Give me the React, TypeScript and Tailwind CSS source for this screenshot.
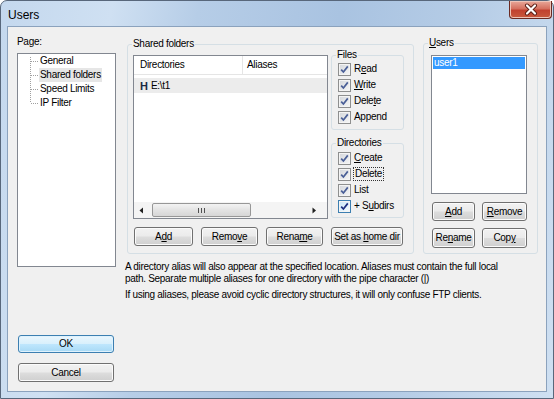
import React from 'react';

const btnBase =
  'flex items-center justify-center rounded-[3px] border text-[10px] leading-none text-black shadow-[inset_0_0_0_1px_#fbfbfb]';
const btnGrey = 'border-[#707070] bg-[linear-gradient(to_bottom,#f2f2f2_0%,#ebebeb_48%,#dddddd_52%,#cfcfcf_100%)]';

function Btn({ children, className = '', strong = false }: { children: React.ReactNode; className?: string; strong?: boolean }) {
  return (
    <div
      className={`${btnBase} ${btnGrey} ${
        strong ? 'border-[#1e1e1e] shadow-[inset_0_0_0_1px_#1e1e1e,inset_0_0_0_2px_#f6f6f6]' : ''
      } ${className}`}
    >
      <span className="whitespace-pre">{children}</span>
    </div>
  );
}

function Check({ label, focus = false, hot = false }: { label: React.ReactNode; focus?: boolean; hot?: boolean }) {
  return (
    <div className="flex h-[16px] items-center gap-[3px] pl-[6px]">
      <span
        className={`flex h-[13px] w-[13px] items-center justify-center border ${
          hot
            ? 'border-[#3c7fb1] bg-[linear-gradient(135deg,#c9e6f7,#f5fbfe)]'
            : 'border-[#8e8f8f] bg-[linear-gradient(135deg,#d3d6db,#f7f7f7)]'
        } shadow-[inset_0_0_0_1px_#f4f4f4]`}
      >
        <svg width="9" height="9" viewBox="0 0 9 9">
          <path
            d="M1.2 4.6 L3.4 7 L7.8 1.4"
            fill="none"
            stroke={hot ? '#1c2f80' : '#4a5f97'}
            strokeWidth="1.7"
          />
        </svg>
      </span>
      <span className={focus ? 'outline-1 outline-dotted outline-[#333] px-[1px]' : ''}>{label}</span>
    </div>
  );
}

function Group({
  legend,
  className = '',
  children,
}: {
  legend: React.ReactNode;
  className?: string;
  children: React.ReactNode;
}) {
  return (
    <fieldset className={`rounded-[3px] border border-[#d5dfe5] ${className}`}>
      <legend className="ml-[4px] px-[1px] leading-[12px]">{legend}</legend>
      {children}
    </fieldset>
  );
}

export default function App() {
  return (
    <div className="h-[399px] w-[554px] bg-white font-['Liberation_Sans',Arial,sans-serif]">
      <div className="flex h-[399px] w-[554px] flex-col rounded-t-[7px] border border-[#58677b] bg-[linear-gradient(100deg,#c4d8ee_0%,#cfe0f2_18%,#b6cde7_32%,#a9c3e1_55%,#b5cce6_75%,#cfe0f2_100%)] px-[6px]">
        {/* title bar */}
        <div className="flex h-[25px] items-start justify-between">
          <span className="pl-[1px] pt-[7px] text-[12px] leading-[14px] text-black">Users</span>
          <div className="-mr-[5px] flex h-[18px] w-[43px] items-center justify-center rounded-b-[4px] border border-t-0 border-[#6b2a22] bg-[linear-gradient(to_bottom,#e9a99a_0%,#d5705f_45%,#c1412f_55%,#c85a3e_100%)] shadow-[inset_0_0_0_1px_#eec4b8]">
            <svg width="16" height="13" viewBox="0 0 16 13">
              <path d="M4 2.5 L12 10.5 M12 2.5 L4 10.5" stroke="#5a1d14" strokeWidth="4" strokeLinecap="round" />
              <path d="M4 2.5 L12 10.5 M12 2.5 L4 10.5" stroke="#ffffff" strokeWidth="2.2" strokeLinecap="round" />
            </svg>
          </div>
        </div>

        {/* client area */}
        <div className="flex h-[366px] w-[540px] border border-[#8ba2bd] bg-[#f0f0f0] text-[10px] leading-[12px] tracking-[-0.3px] text-black">
          {/* left column */}
          <div className="ml-[9px] flex w-[99px] flex-col pt-[9px]">
            <span className="h-[12px]">Page:</span>
            <div className="mt-[5px] flex h-[214px] border border-[#828790] bg-white">
              <svg width="21" height="56" viewBox="0 0 21 56" className="shrink-0">
                <g stroke="#a0a0a0" strokeWidth="1" strokeDasharray="1 1">
                  <path d="M12.5 3 V49" />
                  <path d="M13 7.5 H20 M13 21.5 H20 M13 35.5 H20 M13 49.5 H20" />
                </g>
              </svg>
              <div className="flex flex-col">
                <span className="h-[14px] px-[1px] leading-[14px]">General</span>
                <span className="h-[14px] bg-[#e6e6e6] px-[1px] leading-[14px]">Shared folders</span>
                <span className="h-[14px] px-[1px] leading-[14px]">Speed Limits</span>
                <span className="h-[14px] px-[1px] leading-[14px]">IP Filter</span>
              </div>
            </div>
            <div className="ml-[1px] mt-[68px] flex h-[18px] w-[96px] items-center justify-center rounded-[3px] border border-[#3c7fb1] bg-[linear-gradient(to_bottom,#eaf6fd_0%,#d9f0fc_48%,#bee6fd_52%,#a7d9f5_100%)] text-[10px] shadow-[inset_0_0_0_1px_#dff2fd]">
              OK
            </div>
            <Btn className="ml-[1px] mt-[10px] h-[19px] w-[96px]">Cancel</Btn>
          </div>

          {/* right region */}
          <div className="ml-[11px] flex flex-col pt-[11px]">
            <div className="flex items-start gap-[9px]">
              {/* shared folders */}
              <Group legend="Shared folders" className="h-[216px] w-[287px]">
                <div className="px-[5px] pt-[5px]">
                  <div className="flex items-start gap-[3px]">
                    <div className="flex h-[164px] w-[195px] flex-col border border-[#828790] bg-white">
                      <div className="flex h-[19px] border-b border-[#e5e5e5]">
                        <span className="flex w-[109px] items-center border-r border-[#e5e5e5] pl-[6px]">Directories</span>
                        <span className="flex items-center pl-[4px]">Aliases</span>
                      </div>
                      <div className="mt-[3px] flex h-[15px] items-center bg-[#ececec] pl-[6px]">
                        <span className="w-[11px] text-[11px] font-bold text-[#1c2a44]">H</span>
                        <span>E:\t1</span>
                      </div>
                      <div className="flex-1" />
                      <div className="flex h-[16px] items-center bg-[#f4f4f4] px-[4px]">
                        <svg width="6" height="7" viewBox="0 0 6 7" className="ml-[1px]">
                          <path d="M4 0.5 L0.5 3.5 L4 6.5 Z" fill="#202020" />
                        </svg>
                        <div className="ml-[7px] flex h-[14px] w-[99px] items-center justify-center rounded-[2px] border border-[#979797] bg-[linear-gradient(to_bottom,#f3f3f3,#e3e3e3_50%,#d6d6d6)]">
                          <svg width="7" height="5" viewBox="0 0 7 5">
                            <path d="M0.5 0 V5 M3.5 0 V5 M6.5 0 V5" stroke="#505050" strokeWidth="1" />
                          </svg>
                        </div>
                        <div className="flex-1" />
                        <svg width="6" height="7" viewBox="0 0 6 7" className="mr-[6px]">
                          <path d="M1.5 0.5 L5 3.5 L1.5 6.5 Z" fill="#202020" />
                        </svg>
                      </div>
                    </div>
                    <div className="-mt-[6px] flex w-[73px] flex-col gap-[7px]">
                      <Group legend="Files" className="h-[81px]">
                        <Check label={<>R<u>e</u>ad</>} />
                        <Check label={<><u>W</u>rite</>} />
                        <Check label={<>Dele<u>t</u>e</>} />
                        <Check label="Append" />
                      </Group>
                      <Group legend="Directories" className="h-[81px] pt-[1px]">
                        <Check label={<><u>C</u>reate</>} />
                        <Check label="Delete" focus />
                        <Check label="List" />
                        <Check label={<>+ S<u>u</u>bdirs</>} hot />
                      </Group>
                    </div>
                  </div>
                  <div className="mt-[8px] flex gap-[8px] pl-[1px]">
                    <Btn className="h-[19px] w-[59px]">A<u>d</u>d</Btn>
                    <Btn className="h-[19px] w-[57px]">Remo<u>v</u>e</Btn>
                    <Btn className="h-[19px] w-[57px]">Rena<u>m</u>e</Btn>
                    <Btn className="h-[19px] w-[72px]">Set as <u>h</u>ome dir</Btn>
                  </div>
                </div>
              </Group>

              {/* users */}
              <Group legend={<><u>U</u>sers</>} className="-mt-[1px] h-[217px] w-[115px]">
                <div className="pl-[7px] pt-[6px]">
                  <div className="h-[139px] w-[96px] border border-[#828790] bg-white p-[1px]">
                    <div className="h-[12px] bg-[#3399ff] pl-[1px] leading-[12px] text-white">user1</div>
                  </div>
                  <div className="mt-[8px] flex gap-[7px] pl-[1px]">
                    <Btn className="h-[19px] w-[43px]"><u>A</u>dd</Btn>
                    <Btn strong className="h-[19px] w-[45px]"><u>R</u>emove</Btn>
                  </div>
                  <div className="mt-[7px] flex gap-[7px] pl-[1px]">
                    <Btn strong className="h-[20px] w-[43px]">Re<u>n</u>ame</Btn>
                    <Btn strong className="h-[20px] w-[45px]">Cop<u>y</u></Btn>
                  </div>
                </div>
              </Group>
            </div>

            <div className="-ml-[2px] mt-[7px] flex flex-col gap-[4px]">
              <p>
                A directory alias will also appear at the specified location. Aliases must contain the full local
                <br />
                path. Separate multiple aliases for one directory with the pipe character (|)
              </p>
              <p>If using aliases, please avoid cyclic directory structures, it will only confuse FTP clients.</p>
            </div>
          </div>
        </div>
      </div>
    </div>
  );
}
